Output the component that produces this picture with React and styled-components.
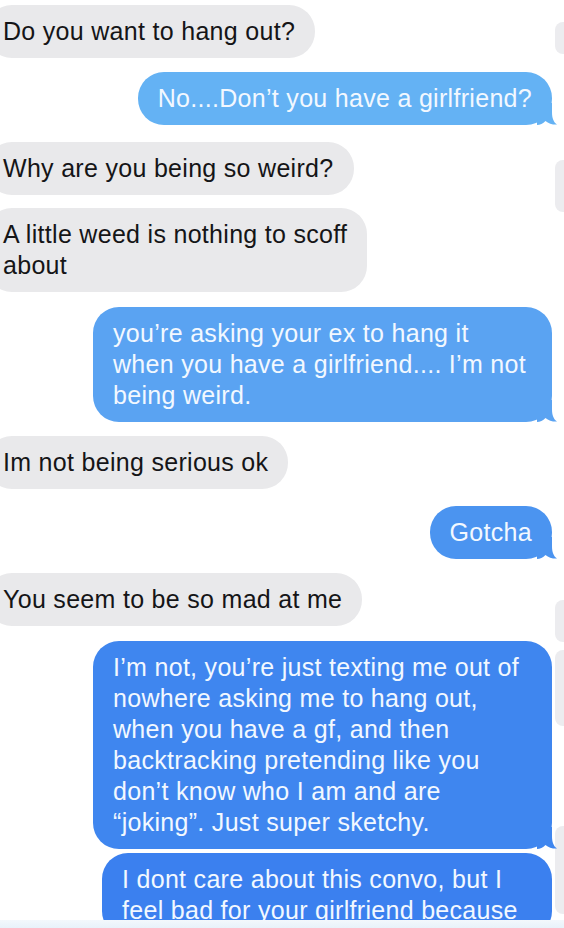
import React from "react";
import styled, { createGlobalStyle } from "styled-components";

const GlobalStyle = createGlobalStyle`
  html, body {
    margin: 0;
    padding: 0;
    background: #ffffff;
  }
  body {
    font-family: "Liberation Sans", Arial, Helvetica, sans-serif;
  }
`;

const messages = [
  { from: "them", gap: 5, lines: ["Do you want to hang out?"] },
  { from: "me", gap: 14, color: "#64b2f4", lines: ["No....Don’t you have a girlfriend?"] },
  { from: "them", gap: 17, lines: ["Why are you being so weird?"] },
  { from: "them", gap: 13, lines: ["A little weed is nothing to scoff", "about"] },
  {
    from: "me",
    gap: 15,
    color: "#5aa3f2",
    width: 459,
    lines: ["you’re asking your ex to hang it", "when you have a girlfriend.... I’m not", "being weird."],
  },
  { from: "them", gap: 14, lines: ["Im not being serious ok"] },
  { from: "me", gap: 17, color: "#4b94f0", lines: ["Gotcha"] },
  { from: "them", gap: 14, lines: ["You seem to be so mad at me"] },
  {
    from: "me",
    gap: 15,
    color: "#3f86ef",
    width: 459,
    lines: [
      "I’m not, you’re just texting me out of",
      "nowhere asking me to hang out,",
      "when you have a gf, and then",
      "backtracking pretending like you",
      "don’t know who I am and are",
      "“joking”. Just super sketchy.",
    ],
  },
  {
    from: "me",
    gap: 4,
    color: "#3b80ef",
    width: 450,
    noTail: true,
    lines: ["I dont care about this convo, but I", "feel bad for your girlfriend because"],
  },
];

const slivers = [
  { gap: 22, height: 32 },
  { gap: 106, height: 52 },
  { gap: 388, height: 42 },
  { gap: 8, height: 76 },
  { gap: 100, height: 88 },
];

const Page = styled.div`
  height: 928px;
  display: flex;
  flex-direction: column;
  overflow: hidden;
`;

const Screen = styled.div`
  flex: 1;
  display: grid;
  grid-template-columns: 1fr 9px;
  column-gap: 3px;
  overflow: hidden;
`;

const Thread = styled.div`
  display: flex;
  flex-direction: column;
  min-width: 0;
`;

const Row = styled.div`
  display: flex;
  justify-content: ${(p) => (p.$me ? "flex-end" : "flex-start")};
  margin-top: ${(p) => p.$gap}px;
`;

const Bubble = styled.div`
  position: relative;
  box-sizing: border-box;
  width: ${(p) => (p.$width ? `${p.$width}px` : "auto")};
  padding: 11px ${(p) => (p.$me ? "20px" : "20px")} 11px ${(p) => (p.$me ? "20px" : "17px")};
  margin-left: ${(p) => (p.$me ? "0" : "-14px")};
  border-radius: 26px;
  background: ${(p) => (p.$me ? p.$color : "#e9e9eb")};
  color: ${(p) => (p.$me ? "#f2f8ff" : "#151517")};
  font-size: 25px;
  line-height: 31px;
  letter-spacing: 0.3px;
  white-space: nowrap;
`;

const Line = styled.span`
  display: block;
`;

const Tail = styled.svg`
  position: absolute;
  right: -5px;
  bottom: 0;
  width: 20px;
  height: 22px;
  fill: ${(p) => p.$color};
`;

const Strip = styled.div`
  display: flex;
  flex-direction: column;
`;

const Sliver = styled.div`
  margin-top: ${(p) => p.$gap}px;
  height: ${(p) => p.$height}px;
  background: #ececef;
  border-radius: 8px 0 0 8px;
`;

const Band = styled.div`
  height: 8px;
  background: linear-gradient(to bottom, #f3f8fc, #e8f2fa);
`;

const Message = ({ msg }) => {
  const me = msg.from === "me";
  return (
    <Row $me={me} $gap={msg.gap}>
      <Bubble $me={me} $color={msg.color} $width={msg.width}>
        {msg.lines.map((l, i) => (
          <Line key={i}>{l}</Line>
        ))}
        {me && !msg.noTail && (
          <Tail viewBox="0 0 20 22" $color={msg.color}>
            <path d="M0 0 H15 V9 C15 15 16.5 19 20 21.6 C15.5 21.8 11.5 20.6 8.5 18 C6 20.5 3 22 0 22 Z" />
          </Tail>
        )}
      </Bubble>
    </Row>
  );
};

export default function App() {
  return (
    <>
      <GlobalStyle />
      <Page>
        <Screen>
          <Thread>
            {messages.map((m, i) => (
              <Message key={i} msg={m} />
            ))}
          </Thread>
          <Strip>
            {slivers.map((s, i) => (
              <Sliver key={i} $gap={s.gap} $height={s.height} />
            ))}
          </Strip>
        </Screen>
        <Band />
      </Page>
    </>
  );
}
